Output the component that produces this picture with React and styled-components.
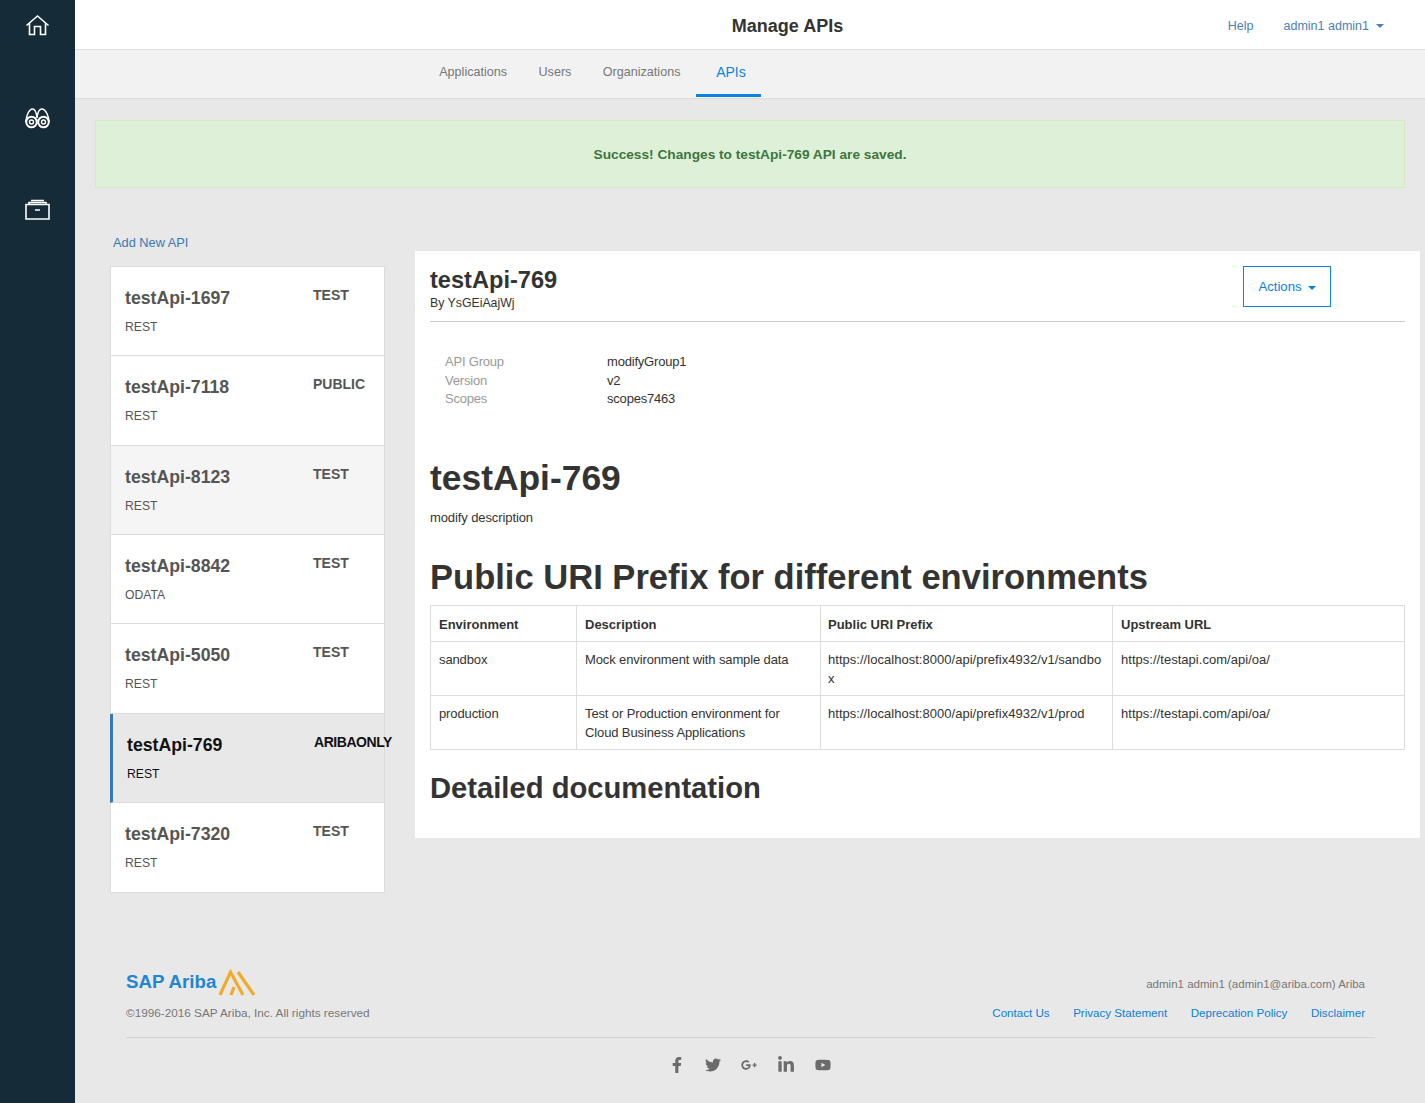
import React from "react";
import styled, { createGlobalStyle } from "styled-components";
import { FaFacebookF, FaTwitter, FaGooglePlusG, FaLinkedinIn, FaYoutube } from "react-icons/fa";

const GlobalStyle = createGlobalStyle`
  html, body {
    margin: 0;
    padding: 0;
    background: #e8e8e8;
    font-family: "Liberation Sans", Arial, sans-serif;
    font-size: 13px;
    color: #333;
  }
  * { box-sizing: border-box; }
`;

const Page = styled.div`
  display: flex;
  min-height: 1103px;
`;
const Sidebar = styled.nav`
  width: 75px;
  flex: none;
  background: #152b38;
  display: flex;
  flex-direction: column;
  align-items: center;
  gap: 64px;
  padding-top: 12px;
`;
const SideIcon = styled.svg`
  display: block;
  width: 28px;
  height: 28px;
  fill: none;
  stroke: #fff;
  stroke-width: 1.6;
`;
const Main = styled.div`
  flex: 1;
  min-width: 0;
  display: flex;
  flex-direction: column;
`;
const Header = styled.header`
  height: 50px;
  padding: 2px 0 0 75px;
  background: #fff;
  border-bottom: 1px solid #dcdcdc;
  display: grid;
  grid-template-columns: 1fr auto 1fr;
  align-items: center;
`;
const Title = styled.h1`
  grid-column: 2;
  margin: 2px 0 0;
  font-size: 18px;
  font-weight: 700;
  color: #333;
`;
const HeaderLinks = styled.div`
  justify-self: end;
  display: flex;
  gap: 30px;
  padding-right: 41px;
  font-size: 12.5px;
  color: #4a7fb8;
`;
const Caret = styled.span`
  display: inline-block;
  width: 0;
  height: 0;
  margin-left: ${(p) => p.$gap || 6}px;
  vertical-align: middle;
  border-top: 4px solid currentColor;
  border-left: 4px solid transparent;
  border-right: 4px solid transparent;
`;
const SubNav = styled.div`
  height: 49px;
  background: #f2f2f2;
  border-bottom: 1px solid #dcdcdc;
  display: flex;
  padding-left: 348.5px;
`;
const Tab = styled.a`
  height: 47px;
  padding: ${(p) => (p.$active ? "0 15px 0 20px" : "0 15.7px")};
  display: flex;
  align-items: center;
  font-size: ${(p) => (p.$active ? "14px" : "12.6px")};
  color: ${(p) => (p.$active ? "#0a84e0" : "#777")};
  border-bottom: 3px solid ${(p) => (p.$active ? "#0a84e0" : "transparent")};
`;
const Alert = styled.div`
  margin: 21px 20px 0;
  height: 68px;
  background: #dff0d8;
  border: 1px solid #d6e9c6;
  color: #3c763d;
  font-weight: 700;
  font-size: 13.7px;
  display: flex;
  align-items: center;
  justify-content: center;
`;
const Columns = styled.div`
  display: flex;
  align-items: flex-start;
  margin-top: 47px;
`;
const ListCol = styled.div`
  width: 275px;
  margin-left: 35px;
  flex: none;
`;
const AddLink = styled.a`
  display: block;
  margin: 0 0 15px 3px;
  height: 16px;
  line-height: 16px;
  font-size: 12.8px;
  color: #3a78b5;
`;
const List = styled.div`
  border: 1px solid #dcdcdc;
  border-bottom-width: 0;
  background: #fff;
`;
const Item = styled.div`
  height: 89.37px;
  padding: 20px 0 0 14px;
  background: ${(p) => (p.$active ? "#e8e8e8" : p.$muted ? "#f5f5f5" : "#fff")};
  border-bottom: 1px solid #dcdcdc;
  color: ${(p) => (p.$active ? "#111" : "#555")};
  border-left: ${(p) => (p.$active ? "3px solid #337ab7" : "0")};
  margin-left: ${(p) => (p.$active ? "-1px" : "0")};
  display: grid;
  grid-template-columns: ${(p) => (p.$active ? "187px" : "188px")} auto;
  grid-template-rows: 22px auto;
  row-gap: 10px;
`;
const ItemName = styled.div`
  font-size: 17.7px;
  font-weight: 700;
  line-height: 22px;
`;
const ItemTag = styled.div`
  font-size: 14px;
  font-weight: 700;
  line-height: 16px;
  white-space: nowrap;
  letter-spacing: ${(p) => (p.$active ? "-0.45px" : "0")};
`;
const ItemType = styled.div`
  grid-column: 1;
  font-size: 12.2px;
  line-height: 16px;
`;
const Panel = styled.section`
  width: 1005px;
  margin: 16px 0 0 30px;
  padding: 16px 15px 0;
  height: 587px;
  background: #fff;
`;
const PanelHead = styled.div`
  height: 55px;
  border-bottom: 1px solid #ccc;
  display: flex;
  justify-content: space-between;
  align-items: flex-start;
`;
const PanelTitle = styled.h2`
  margin: 0;
  font-size: 23.6px;
  line-height: 27px;
  font-weight: 700;
  color: #333;
`;
const By = styled.div`
  margin-top: 2px;
  font-size: 12.3px;
  line-height: 15px;
  color: #333;
`;
const ActionBtn = styled.button`
  width: 88px;
  height: 41px;
  margin: -1px 74px 0 0;
  background: #fff;
  border: 1px solid #0a84e0;
  color: #0a7fd8;
  font: 13.2px "Liberation Sans", Arial, sans-serif;
`;
const Meta = styled.dl`
  margin: 31px 0 0 15px;
  display: grid;
  grid-template-columns: 162px auto;
  grid-auto-rows: 18.7px;
  line-height: 18px;
  letter-spacing: -0.2px;
`;
const MetaKey = styled.dt`
  color: #999;
`;
const MetaVal = styled.dd`
  margin: 0;
  color: #333;
`;
const H1 = styled.h2`
  margin: 49px 0 0;
  font-size: 35.4px;
  line-height: 40px;
  font-weight: 700;
  color: #333;
`;
const Para = styled.p`
  margin: 11px 0 0;
  line-height: 18px;
  letter-spacing: -0.1px;
  color: #333;
`;
const H2 = styled.h2`
  margin: 30px 0 0;
  font-size: 34.55px;
  line-height: 40px;
  font-weight: 700;
  color: #333;
`;
const Table = styled.table`
  width: 100%;
  margin-top: 8px;
  border-collapse: collapse;
  table-layout: fixed;
  line-height: 19px;
  color: #333;

  tr > :nth-child(3) {
    padding-left: 7px;
  }
`;
const Th = styled.th`
  border: 1px solid #ddd;
  padding: 9px 8px 7px;
  text-align: left;
  font-weight: 700;
  font-size: 13px;
  height: 36px;
`;
const Td = styled.td`
  border: 1px solid #ddd;
  padding: 8px 8px 7px;
  vertical-align: top;
  word-break: ${(p) => (p.$url ? "break-all" : "normal")};
  letter-spacing: ${(p) => (p.$url ? "0.03px" : "-0.12px")};
`;
const H3 = styled.h3`
  margin: 20px 0 0;
  font-size: 29.2px;
  line-height: 36px;
  font-weight: 700;
  color: #333;
`;
const Footer = styled.footer`
  margin: 75px 50px 0 51px;
`;
const FooterTop = styled.div`
  display: flex;
  justify-content: space-between;
  padding-right: 10px;
  height: 70px;
  border-bottom: 1px solid #d4d4d4;
`;
const Logo = styled.div`
  display: flex;
  align-items: center;
  height: 28px;
`;
const LogoText = styled.span`
  font-size: 18.7px;
  font-weight: 700;
  color: #1f86d0;
  margin-right: 2px;
`;
const LogoMark = styled.svg`
  display: block;
  width: 38px;
  height: 28px;
  margin-top: 1px;
  overflow: visible;
  fill: none;
  stroke: #f0ab2a;
  stroke-width: 3.2;
`;
const Copy = styled.div`
  margin-top: 10px;
  font-size: 11.75px;
  color: #777;
`;
const FootRight = styled.div`
  text-align: right;
  padding-top: 10px;
`;
const UserLine = styled.div`
  font-size: 11.5px;
  color: #777;
`;
const FootLinks = styled.div`
  margin-top: 16px;
  display: flex;
  justify-content: flex-end;
  gap: 23.5px;
  font-size: 11.6px;
  color: #0a7fd8;
`;
const Social = styled.div`
  display: flex;
  justify-content: center;
  align-items: center;
  gap: 20px;
  margin-top: 18px;
  padding-right: 2px;
  color: #6b6b6b;
  font-size: 16px;
`;

const items = [
  { name: "testApi-1697", tag: "TEST", type: "REST" },
  { name: "testApi-7118", tag: "PUBLIC", type: "REST" },
  { name: "testApi-8123", tag: "TEST", type: "REST", muted: true },
  { name: "testApi-8842", tag: "TEST", type: "ODATA" },
  { name: "testApi-5050", tag: "TEST", type: "REST" },
  { name: "testApi-769", tag: "ARIBAONLY", type: "REST", active: true },
  { name: "testApi-7320", tag: "TEST", type: "REST" },
];

const HomeIcon = () => (
  <SideIcon viewBox="0 0 28 28">
    <path d="M2.500 13.500 13.500 4l11 9.500M5.500 11v11.500h5v-8h6v8h5V11" />
  </SideIcon>
);
const BinocularsIcon = () => (
  <SideIcon viewBox="0 0 28 28">
    <circle cx="7.500" cy="18" r="5.300" strokeWidth="2" />
    <circle cx="19.500" cy="18" r="5.300" strokeWidth="2" />
    <circle cx="7.500" cy="18" r="2" strokeWidth="1.400" />
    <circle cx="19.500" cy="18" r="2" strokeWidth="1.400" />
    <path d="M2 18C2 12 5 5 8.500 5 11 5 12.500 9 13 14c.5-5 2-9 5-9 3.500 0 7 7 7 13" strokeWidth="1.500" />
  </SideIcon>
);
const ArchiveIcon = () => (
  <SideIcon viewBox="0 0 28 28" strokeWidth="1.300">
    <path d="M2 8.500h23V23H2zM5 8.500V6.500h17v2M7 4.500h13M11 14h5" />
  </SideIcon>
);
const AribaMark = () => (
  <LogoMark viewBox="0 0 38 28">
    <path d="M2 27 12.500 4 25 27M20 4l16 23M13 27l3-8" />
  </LogoMark>
);

export default function App() {
  return (
    <Page>
      <GlobalStyle />
      <Sidebar>
        <HomeIcon />
        <BinocularsIcon />
        <ArchiveIcon />
      </Sidebar>
      <Main>
        <Header>
          <Title>Manage APIs</Title>
          <HeaderLinks>
            <span>Help</span>
            <span>
              admin1 admin1
              <Caret $gap={7} />
            </span>
          </HeaderLinks>
        </Header>
        <SubNav>
          <Tab>Applications</Tab>
          <Tab>Users</Tab>
          <Tab>Organizations</Tab>
          <Tab $active>APIs</Tab>
        </SubNav>
        <Alert>Success! Changes to testApi-769 API are saved.</Alert>
        <Columns>
          <ListCol>
            <AddLink>Add New API</AddLink>
            <List>
              {items.map((it) => (
                <Item key={it.name} $active={it.active} $muted={it.muted}>
                  <ItemName>{it.name}</ItemName>
                  <ItemTag $active={it.active}>{it.tag}</ItemTag>
                  <ItemType>{it.type}</ItemType>
                </Item>
              ))}
            </List>
          </ListCol>
          <Panel>
            <PanelHead>
              <div>
                <PanelTitle>testApi-769</PanelTitle>
                <By>By YsGEiAajWj</By>
              </div>
              <ActionBtn>
                Actions
                <Caret />
              </ActionBtn>
            </PanelHead>
            <Meta>
              <MetaKey>API Group</MetaKey>
              <MetaVal>modifyGroup1</MetaVal>
              <MetaKey>Version</MetaKey>
              <MetaVal>v2</MetaVal>
              <MetaKey>Scopes</MetaKey>
              <MetaVal>scopes7463</MetaVal>
            </Meta>
            <H1>testApi-769</H1>
            <Para>modify description</Para>
            <H2>Public URI Prefix for different environments</H2>
            <Table>
              <colgroup>
                <col width="146" />
                <col width="244" />
                <col width="292" />
                <col width="292" />
              </colgroup>
              <thead>
                <tr>
                  <Th>Environment</Th>
                  <Th>Description</Th>
                  <Th>Public URI Prefix</Th>
                  <Th>Upstream URL</Th>
                </tr>
              </thead>
              <tbody>
                <tr>
                  <Td>sandbox</Td>
                  <Td>Mock environment with sample data</Td>
                  <Td $url>https://localhost:8000/api/prefix4932/v1/sandbox</Td>
                  <Td $url>https://testapi.com/api/oa/</Td>
                </tr>
                <tr>
                  <Td>production</Td>
                  <Td>Test or Production environment for Cloud Business Applications</Td>
                  <Td $url>https://localhost:8000/api/prefix4932/v1/prod</Td>
                  <Td $url>https://testapi.com/api/oa/</Td>
                </tr>
              </tbody>
            </Table>
            <H3>Detailed documentation</H3>
          </Panel>
        </Columns>
        <Footer>
          <FooterTop>
            <div>
              <Logo>
                <LogoText>SAP Ariba</LogoText>
                <AribaMark />
              </Logo>
              <Copy>©1996-2016 SAP Ariba, Inc. All rights reserved</Copy>
            </div>
            <FootRight>
              <UserLine>admin1 admin1 (admin1@ariba.com) Ariba</UserLine>
              <FootLinks>
                <span>Contact Us</span>
                <span>Privacy Statement</span>
                <span>Deprecation Policy</span>
                <span>Disclaimer</span>
              </FootLinks>
            </FootRight>
          </FooterTop>
          <Social>
            <FaFacebookF />
            <FaTwitter />
            <FaGooglePlusG />
            <FaLinkedinIn size={18} />
            <FaYoutube />
          </Social>
        </Footer>
      </Main>
    </Page>
  );
}
